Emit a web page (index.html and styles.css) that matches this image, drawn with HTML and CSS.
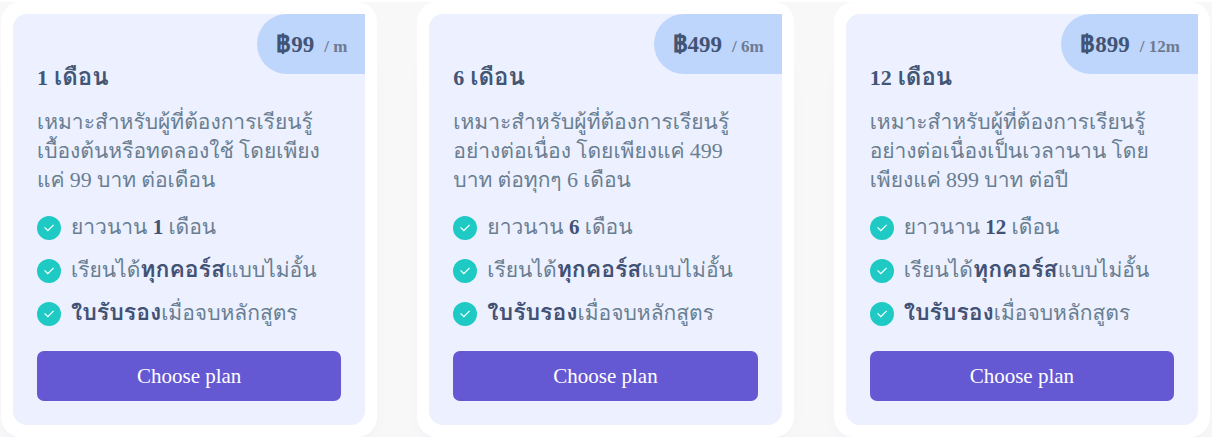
FILE: index.html
```
<!DOCTYPE html>
<html lang="th">
<head>
<meta charset="utf-8">
<title>Plans</title>
<link rel="stylesheet" href="styles.css">
</head>
<body>
<svg class="sprite" aria-hidden="true">
  <symbol id="check" viewBox="0 0 24 24">
    <path d="M0 0h24v24H0z" fill="none"></path>
    <path d="M10 15.172l9.192-9.193 1.415 1.414L10 18l-6.364-6.364 1.414-1.414z" fill="currentColor"></path>
  </symbol>
</svg>
<main class="plans">
  <article class="plan">
    <div class="inner">
      <p class="pricing"><span><span class="baht">฿</span>99</span> <small>/ m</small></p>
      <h2 class="title"><span class="num">1</span> เดือน</h2>
      <p class="info">เหมาะสำหรับผู้ที่ต้องการเรียนรู้<br>เบื้องต้นหรือทดลองใช้ โดยเพียง<br>แค่ <span class="num">99</span> บาท ต่อเดือน</p>
      <ul class="features">
        <li><span class="icon"><svg><use href="#check"></use></svg></span><span>ยาวนาน <strong class="num">1</strong> เดือน</span></li>
        <li><span class="icon"><svg><use href="#check"></use></svg></span><span>เรียนได้<strong>ทุกคอร์ส</strong>แบบไม่อั้น</span></li>
        <li><span class="icon"><svg><use href="#check"></use></svg></span><span><strong>ใบรับรอง</strong>เมื่อจบหลักสูตร</span></li>
      </ul>
      <button class="button" type="button">Choose plan</button>
    </div>
  </article>
  <article class="plan">
    <div class="inner">
      <p class="pricing"><span><span class="baht">฿</span>499</span> <small>/ 6m</small></p>
      <h2 class="title"><span class="num">6</span> เดือน</h2>
      <p class="info">เหมาะสำหรับผู้ที่ต้องการเรียนรู้<br>อย่างต่อเนื่อง โดยเพียงแค่ <span class="num">499</span><br>บาท ต่อทุกๆ <span class="num">6</span> เดือน</p>
      <ul class="features">
        <li><span class="icon"><svg><use href="#check"></use></svg></span><span>ยาวนาน <strong class="num">6</strong> เดือน</span></li>
        <li><span class="icon"><svg><use href="#check"></use></svg></span><span>เรียนได้<strong>ทุกคอร์ส</strong>แบบไม่อั้น</span></li>
        <li><span class="icon"><svg><use href="#check"></use></svg></span><span><strong>ใบรับรอง</strong>เมื่อจบหลักสูตร</span></li>
      </ul>
      <button class="button" type="button">Choose plan</button>
    </div>
  </article>
  <article class="plan">
    <div class="inner">
      <p class="pricing"><span><span class="baht">฿</span>899</span> <small>/ 12m</small></p>
      <h2 class="title"><span class="num">12</span> เดือน</h2>
      <p class="info">เหมาะสำหรับผู้ที่ต้องการเรียนรู้<br>อย่างต่อเนื่องเป็นเวลานาน โดย<br>เพียงแค่ <span class="num">899</span> บาท ต่อปี</p>
      <ul class="features">
        <li><span class="icon"><svg><use href="#check"></use></svg></span><span>ยาวนาน <strong class="num">12</strong> เดือน</span></li>
        <li><span class="icon"><svg><use href="#check"></use></svg></span><span>เรียนได้<strong>ทุกคอร์ส</strong>แบบไม่อั้น</span></li>
        <li><span class="icon"><svg><use href="#check"></use></svg></span><span><strong>ใบรับรอง</strong>เมื่อจบหลักสูตร</span></li>
      </ul>
      <button class="button" type="button">Choose plan</button>
    </div>
  </article>
</main>
</body>
</html>
```
FILE: styles.css
```
* { box-sizing: border-box; }
html { background: #fff; }
body {
  margin: 0;
  padding-top: 2px;
  overflow: hidden;
  font-family: "Liberation Serif", Loma, Waree, "Noto Sans Thai Looped", "Noto Sans Thai", serif;
  font-size: 21px;
  line-height: 29px;
  color: #697e91;
}
.sprite { display: none; }
.plans {
  display: grid;
  grid-template-columns: repeat(3, 1fr);
  gap: 40px;
  padding: 0 2px 0 1px;
  background: #f8f8f8;
}
.plan {
  padding: 12px;
  border-radius: 20px;
  background: #fff;
  box-shadow: 0 36px 36px -30px rgba(0, 38, 255, 0.2);
}
.inner {
  display: flex;
  flex-direction: column;
  padding: 0 24px 24px;
  border-radius: 14px;
  background: #ecf0ff;
}
.pricing {
  display: flex;
  align-items: center;
  align-self: flex-end;
  gap: 10px;
  height: 60px;
  margin: 0 -24px 0 0;
  padding: 0 18px 0 19px;
  border-radius: 30px 0 0 30px;
  background: #bed6fb;
  color: #425475;
  font-size: 23px;
  font-weight: 700;
}
.baht {
  font-family: "Open Sans", "Noto Sans", sans-serif;
  font-size: 24px;
  line-height: 1;
}
.pricing small {
  padding-top: 4px;
  color: #707a91;
  font-size: 17px;
}
.num {
  font-size: 22px;
  line-height: 1;
}
.title {
  margin: -12px 0 0;
  color: #425675;
  font-size: 24px;
  line-height: 30px;
}
.info { margin: 16px 0 0; }
.features {
  display: flex;
  flex-direction: column;
  gap: 14px;
  margin: 18px 0 0;
  padding: 0;
  list-style: none;
}
.features li {
  display: flex;
  align-items: center;
  gap: 10px;
}
.features strong {
  color: #425275;
  font-size: 23px;
  line-height: 1;
}
.features .num { font-size: 21px; }
.icon {
  display: inline-flex;
  align-items: center;
  justify-content: center;
  width: 24px;
  height: 24px;
  border-radius: 50%;
  background: #1fcac5;
  color: #fff;
}
.icon svg { width: 14px; height: 14px; }
.button {
  margin-top: 23px;
  height: 50px;
  border: 0;
  border-radius: 7px;
  background: #6558d3;
  color: #fff;
  font-family: inherit;
  font-size: 21px;
}
```
